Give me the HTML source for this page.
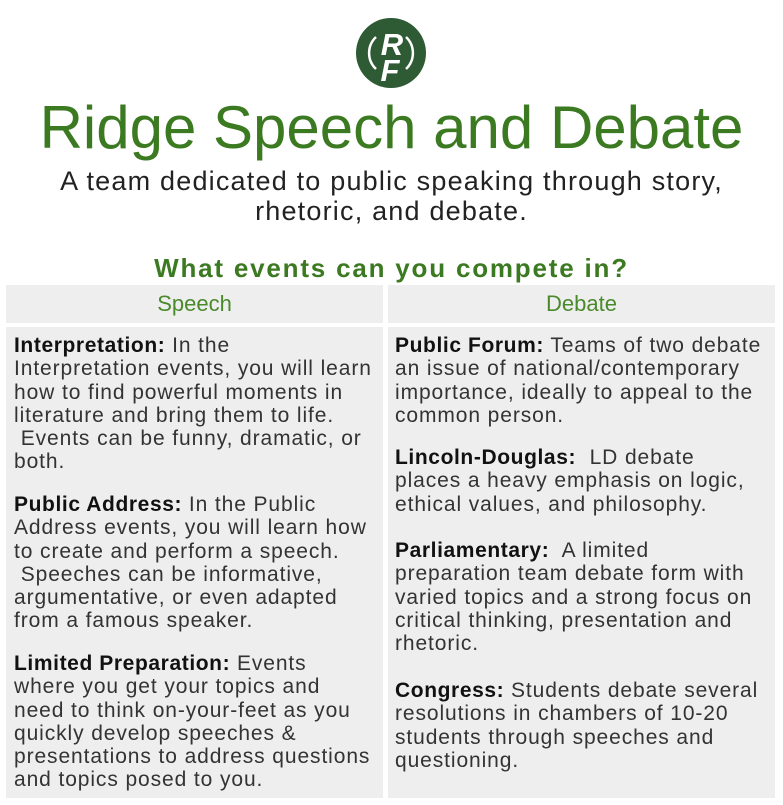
<!DOCTYPE html>
<html><head><style>
body{margin:0;width:783px;height:805px;background:#fff;position:relative;font-family:"Liberation Sans",sans-serif;overflow:hidden}
.a{position:absolute}
.t{left:0;width:783px;text-align:center}
.cell{background:#eeeeee}
.p{position:absolute;font-size:21px;line-height:23.3px;color:#333;white-space:nowrap;letter-spacing:0.9px}
.p b{color:#111;letter-spacing:0.6px}
</style></head><body>
<svg class="a" style="left:355px;top:17px" width="72" height="72" viewBox="0 0 72 72">
<circle cx="36" cy="36" r="35" fill="#2e5a34"/>
<path d="M21 20 A22 22 0 0 0 21 52" stroke="#fff" stroke-width="2.5" fill="none"/>
<path d="M51 20 A22 22 0 0 1 51 52" stroke="#fff" stroke-width="2.5" fill="none"/>
<text x="37" y="38" text-anchor="middle" font-family="Liberation Sans" font-weight="bold" font-style="italic" font-size="31" fill="#fff">R</text>
<text x="35" y="64" text-anchor="middle" font-family="Liberation Sans" font-weight="bold" font-style="italic" font-size="31" fill="#fff">F</text>
</svg>
<div class="a t" style="top:93px;font-size:60px;color:#3c7a22;line-height:70px">Ridge Speech and Debate</div>
<div class="a t" style="top:166px;font-size:27px;line-height:30px;color:#222;letter-spacing:1.2px">A team dedicated to public speaking through story,<br>rhetoric, and debate.</div>
<div class="a t" style="top:251px;font-size:26px;font-weight:bold;color:#3c7a22;line-height:34px;letter-spacing:1.8px">What events can you compete in?</div>
<div class="a cell" style="left:6px;top:285px;width:377px;height:38px;text-align:center;font-size:22px;line-height:38px;color:#4a8a2c">Speech</div>
<div class="a cell" style="left:388px;top:285px;width:387px;height:38px;text-align:center;font-size:22px;line-height:38px;color:#4a8a2c">Debate</div>
<div class="a cell" style="left:6px;top:327px;width:377px;height:471px"></div>
<div class="a cell" style="left:388px;top:327px;width:387px;height:471px"></div>
<div class="p" style="left:14px;top:334px"><b>Interpretation:</b> In the<br>Interpretation events, you will learn<br>how to find powerful moments in<br>literature and bring them to life.<br>&nbsp;Events can be funny, dramatic, or<br>both.</div>
<div class="p" style="left:14px;top:493px"><b>Public Address:</b> In the Public<br>Address events, you will learn how<br>to create and perform a speech.<br>&nbsp;Speeches can be informative,<br>argumentative, or even adapted<br>from a famous speaker.</div>
<div class="p" style="left:14px;top:652px"><b>Limited Preparation:</b> Events<br>where you get your topics and<br>need to think on-your-feet as you<br>quickly develop speeches &amp;<br>presentations to address questions<br>and topics posed to you.</div>
<div class="p" style="left:395px;top:334px"><b>Public Forum:</b> Teams of two debate<br>an issue of national/contemporary<br>importance, ideally to appeal to the<br>common person.</div>
<div class="p" style="left:395px;top:446px"><b>Lincoln-Douglas:</b>&nbsp; LD debate<br>places a heavy emphasis on logic,<br>ethical values, and philosophy.</div>
<div class="p" style="left:395px;top:539px"><b>Parliamentary:</b>&nbsp; A limited<br>preparation team debate form with<br>varied topics and a strong focus on<br>critical thinking, presentation and<br>rhetoric.</div>
<div class="p" style="left:395px;top:679px"><b>Congress:</b> Students debate several<br>resolutions in chambers of 10-20<br>students through speeches and<br>questioning.</div>
</body></html>
